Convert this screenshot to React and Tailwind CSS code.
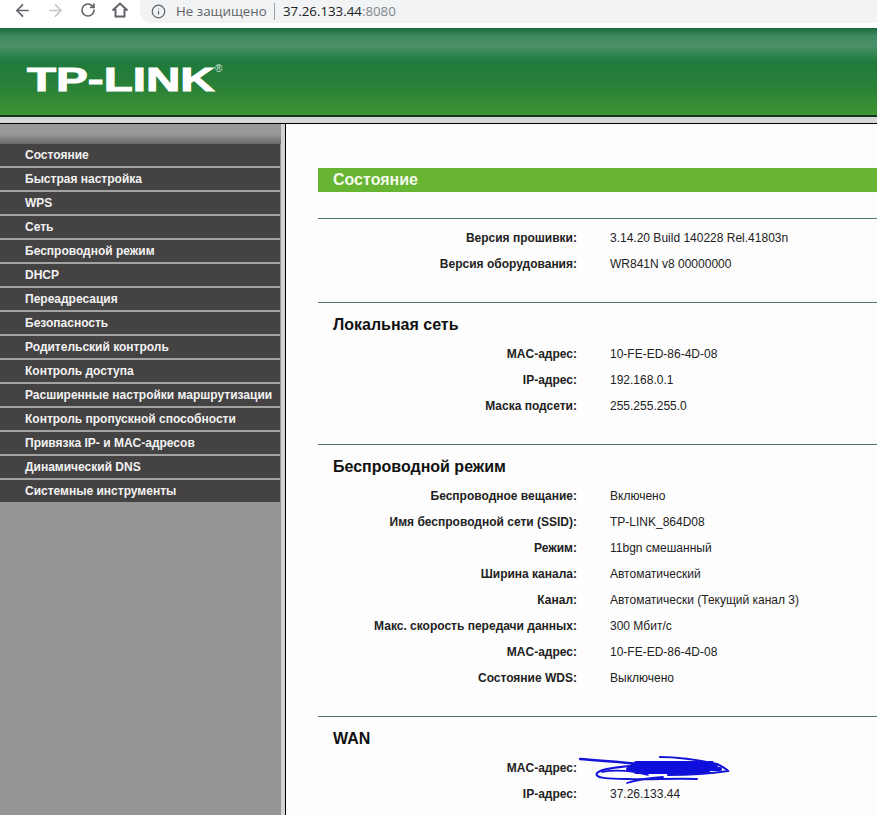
import { ArrowLeft, ArrowRight, RotateCw, Info } from "lucide-react";

const menu = [
  "Состояние",
  "Быстрая настройка",
  "WPS",
  "Сеть",
  "Беспроводной режим",
  "DHCP",
  "Переадресация",
  "Безопасность",
  "Родительский контроль",
  "Контроль доступа",
  "Расширенные настройки маршрутизации",
  "Контроль пропускной способности",
  "Привязка IP- и MAC-адресов",
  "Динамический DNS",
  "Системные инструменты",
];

const sections = [
  {
    rows: [
      ["Версия прошивки:", "3.14.20 Build 140228 Rel.41803n"],
      ["Версия оборудования:", "WR841N v8 00000000"],
    ],
  },
  {
    title: "Локальная сеть",
    rows: [
      ["MAC-адрес:", "10-FE-ED-86-4D-08"],
      ["IP-адрес:", "192.168.0.1"],
      ["Маска подсети:", "255.255.255.0"],
    ],
  },
  {
    title: "Беспроводной режим",
    rows: [
      ["Беспроводное вещание:", "Включено"],
      ["Имя беспроводной сети (SSID):", "TP-LINK_864D08"],
      ["Режим:", "11bgn смешанный"],
      ["Ширина канала:", "Автоматический"],
      ["Канал:", "Автоматически (Текущий канал 3)"],
      ["Макс. скорость передачи данных:", "300 Мбит/с"],
      ["MAC-адрес:", "10-FE-ED-86-4D-08"],
      ["Состояние WDS:", "Выключено"],
    ],
  },
  {
    title: "WAN",
    rows: [
      ["MAC-адрес:", <Scribble key="s" />],
      ["IP-адрес:", "37.26.133.44"],
    ],
  },
];

// blue marker over the WAN mac address
function Scribble() {
  return (
    <svg className="absolute left-[-32px] top-[-15px]" width="160" height="40" viewBox="0 0 160 40" fill="none" strokeLinecap="round">
      <path d="M2 6 C25 8 45 9 70 12" stroke="#1414d6" strokeWidth="2.4" />
      <path d="M58 10 H134 M54 13 H138 M50 16 H142 M58 19 H130" stroke="#0f0fdc" strokeWidth="4" />
      <path d="M82 4 C105 4 125 8 139 11 C145 14 149 16 150 18 C130 21 110 22 90 22" stroke="#1414d6" strokeWidth="2.2" />
      <path d="M60 12 C40 14 22 16 19 20 C16 25 30 26 49 26 C70 27 95 25 119 26" stroke="#1414d6" strokeWidth="2" />
      <path d="M49 30 C58 27 70 25 85 24" stroke="#1414d6" strokeWidth="1.8" />
      <path d="M24 19 C40 16 55 18 70 22" stroke="#1414d6" strokeWidth="1.6" />
    </svg>
  );
}

function Toolbar() {
  return (
    <div className="h-7 shrink-0 bg-white flex items-start text-[#5f6368]">
      <div className="w-[140px] h-[20px] flex items-center shrink-0">
        <ArrowLeft size={19} strokeWidth={2.2} className="ml-[13px]" />
        <ArrowRight size={19} strokeWidth={2.2} className="ml-[14px] text-[#c4c7ca]" />
        <RotateCw size={16} strokeWidth={2.4} className="ml-[15px]" />
        <svg width="18" height="18" viewBox="0 0 18 18" fill="none" stroke="#5f6368" strokeWidth="2" className="ml-[15px]">
          <path d="M1.5 9.5 9 2.5l7.5 7M4.5 8v7.5h9V8" />
        </svg>
      </div>
      <div className="flex-1 h-[23px] bg-[#f1f3f4] rounded-bl-[12px] flex items-center font-['Open_Sans',sans-serif] text-[13.3px]">
        <Info size={15} strokeWidth={2} className="ml-[11px]" />
        <span className="ml-[10px] text-[#5f6368] w-[98px]">Не защищено</span>
        <span className="w-px h-[17px] bg-[#9aa0a6]" />
        <span className="ml-[8px] text-[#202124]">37.26.133.44</span>
        <span className="text-[#80868b]">:8080</span>
      </div>
    </div>
  );
}

function Header() {
  return (
    <div className="h-[89px] shrink-0 border-b-2 border-[#17331f] bg-[linear-gradient(#19693f_0px,#3f8a60_8px,#4b9068_18px,#1e7a3c_34px,#2a8137_60px,#3e9633_87px)] pt-[32px] pl-[27px] flex items-start">
      <span className="inline-block origin-left scale-x-[1.4] text-[34px] leading-[38px] font-bold text-white [-webkit-text-stroke:1px_#fff]">TP-LINK</span>
      <span className="ml-[54px] mt-[3px] text-[10px] leading-[12px] text-[#dfeee0]">®</span>
    </div>
  );
}

function Sidebar() {
  return (
    <div className="w-[286px] shrink-0 flex border-r border-black">
      <div className="w-[281px] bg-[#959595]">
        <div className="h-5 bg-[linear-gradient(#9a9a9a_0,#979797_10px,#6a6a6a_20px)]" />
        <div className="text-[12px] font-bold text-[#f2f2f2]">
          {menu.map((item) => (
            <div key={item} className="h-6 border-b-2 border-[#a3a3a3] last:border-b-0 last:h-[22px] bg-[#444243] w-[280px] pl-[25px] flex items-center">
              {item}
            </div>
          ))}
        </div>
      </div>
      <div className="flex-1 bg-[#d2d2d2]" />
    </div>
  );
}

function Section({ title, rows }) {
  return (
    <div className="border-t border-[#4d7a68] pb-[26px]">
      {title ? (
        <div className="h-[37px] pl-[15px] pt-[9px] text-[16px] leading-[26px] font-bold text-[#111]">{title}</div>
      ) : (
        <div className="h-[5px]" />
      )}
      {rows.map(([label, value]) => (
        <div key={label} className="h-[26px] pt-[2px] flex items-center text-[12px]">
          <div className="w-[259px] text-right font-bold text-[#222] shrink-0">{label}</div>
          <div className="relative ml-[33px] text-[#222]">{value}</div>
        </div>
      ))}
    </div>
  );
}

export default function App() {
  return (
    <div className="w-[877px] h-[815px] overflow-hidden flex flex-col bg-white font-['Liberation_Sans',sans-serif]">
      <Toolbar />
      <Header />
      <div className="h-[7px] shrink-0 bg-[#d6d8d6] border-b border-black" />
      <div className="flex-1 flex min-h-0">
        <Sidebar />
        <div className="flex-1 bg-[#fdfdfd] pl-[32px] pt-[44px]">
          <div className="h-6 bg-[#68b534] pl-[15px] flex items-center text-[16px] font-bold text-[#f4f9ee]">Состояние</div>
          <div className="h-[26px]" />
          {sections.map((s, i) => (
            <Section key={i} title={s.title} rows={s.rows} />
          ))}
        </div>
      </div>
    </div>
  );
}
